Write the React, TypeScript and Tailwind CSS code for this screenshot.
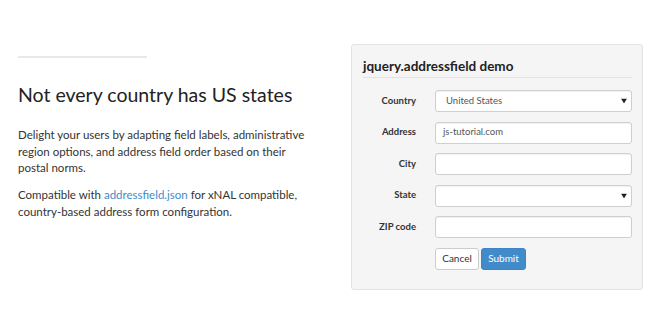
import type { ReactNode } from 'react';

const font = { fontFamily: 'Lato, "Open Sans", "Liberation Sans", sans-serif' };

function Caret() {
  return (
    <svg width="6" height="5" viewBox="0 0 6 5" aria-hidden="true" className="absolute right-[4px] top-1/2 -translate-y-1/2">
      <path d="M0 0h6L3 5z" fill="#222" />
    </svg>
  );
}

function Field({ label, children }: { label: string; children: ReactNode }) {
  return (
    <>
      <span className="text-right text-[9.5px] font-bold text-[#333]">{label}</span>
      {children}
    </>
  );
}

function TextBox({ value = '', select = false }: { value?: string; select?: boolean }) {
  return (
    <div className="relative flex h-[22px] items-center rounded-[3px] border border-[#cfcfcf] bg-white px-[7px] text-[9.5px] text-[#555] shadow-[inset_0_1px_1px_rgba(0,0,0,0.06)]">
      {select ? <span className="pl-[3px]">{value}</span> : <span>{value}</span>}
      {select ? <Caret /> : null}
    </div>
  );
}

export default function App() {
  return (
    <div className="flex h-[330px] w-[660px] gap-[41px] bg-white pl-[18px]" style={font}>
      <div className="flex w-[292px] flex-col pt-[56px]">
        <div className="h-[2px] w-[129px] bg-[#e8e8e8]" />
        <h1 className="mt-[24px] whitespace-nowrap text-[19.5px] leading-[26px] text-[#222]">Not every country has US states</h1>
        <p className="mt-[19px] text-[11.5px] leading-[16.5px] text-[#333]">
          Delight your users by adapting field labels, administrative region options, and address field order based on their postal norms.
        </p>
        <p className="mt-[10.5px] text-[11.5px] leading-[16.5px] text-[#333]">
          Compatible with <a className="text-[#428bca]">addressfield.json</a> for xNAL compatible, country-based address form configuration.
        </p>
      </div>
      <div className="mt-[44px] h-[246px] w-[292px] rounded-[3px] border border-[#e3e3e3] bg-[#f5f5f5] pl-[11px] pr-[10px] pt-[12px]">
        <h2 className="border-b border-[#e2e2e2] pb-[1px] text-[13.5px] font-bold leading-[19px] text-[#222]">jquery.addressfield demo</h2>
        <div className="mt-[12px] grid grid-cols-[53px_1fr] items-center gap-x-[19px] gap-y-[9.5px]">
          <Field label="Country">
            <TextBox value="United States" select />
          </Field>
          <Field label="Address">
            <TextBox value="js-tutorial.com" />
          </Field>
          <Field label="City">
            <TextBox />
          </Field>
          <Field label="State">
            <TextBox select />
          </Field>
          <Field label="ZIP code">
            <TextBox />
          </Field>
          <span />
          <div className="flex gap-[2px]">
            <button className="h-[22px] w-[44px] rounded-[3px] border border-[#ccc] bg-white text-[10px] text-[#333]">Cancel</button>
            <button className="h-[22px] w-[45px] rounded-[3px] border border-[#3f84c4] bg-[#428bca] text-[10px] text-white">Submit</button>
          </div>
        </div>
      </div>
    </div>
  );
}
